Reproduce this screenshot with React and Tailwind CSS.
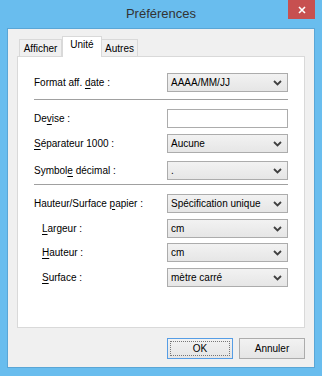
import React from "react";

const font = { fontFamily: '"Liberation Sans", Arial, sans-serif' };

function Chevron() {
  return (
    <svg width="9" height="6" viewBox="0 0 9 6" className="shrink-0">
      <path d="M1 1 L4.5 4.5 L8 1" fill="none" stroke="#404040" strokeWidth="1.8" />
    </svg>
  );
}

function Select({ value }) {
  return (
    <div className="flex h-[19px] w-[121px] items-center justify-between whitespace-nowrap border border-[#acacac] bg-gradient-to-b from-[#f2f2f2] to-[#e6e6e6] pl-[3px] pr-[5px] text-[10px] leading-none text-black">
      <span>{value}</span>
      <Chevron />
    </div>
  );
}

function Label({ children, indent }) {
  return (
    <div className={`whitespace-nowrap text-[10px] leading-none text-black ${indent ? "pl-[8px]" : ""}`}>{children}</div>
  );
}

function Row({ label, children, indent, className = "" }) {
  return (
    <div className={`flex items-center justify-between ${className}`}>
      <Label indent={indent}>{label}</Label>
      {children}
    </div>
  );
}

const U = ({ children }) => <span className="underline underline-offset-2">{children}</span>;

export default function App() {
  return (
    <div style={font} className="flex h-[376px] w-[322px] flex-col bg-[#69bdee] px-[7px] pb-[8px]">
      <div className="relative flex h-[28px] shrink-0 items-center justify-center">
        <span className="pb-[1px] text-[13px] text-[#333]">Préférences</span>
        <div className="absolute right-0 top-0 flex h-[19px] w-[27px] items-center justify-center bg-[#c75050]">
          <svg width="8" height="8" viewBox="0 0 8 8">
            <path d="M1 1 L7 7 M7 1 L1 7" stroke="#fff" strokeWidth="1.6" />
          </svg>
        </div>
      </div>
      <div className="flex flex-1 flex-col border border-[#5aa6d6] bg-[#f0f0f0] px-[9px]">
        <div className="flex h-[27px] items-end pl-[2px] pt-[8px]">
          <div className="flex h-[17px] w-[43px] items-center justify-center border border-b-0 border-[#d9d9d9] bg-[#f0f0f0] pt-[1px] text-[10px] leading-none text-black">
            Afficher
          </div>
          <div className="relative z-10 -mb-px flex h-[21px] w-[40px] items-start justify-center border border-b-0 border-[#d9d9d9] bg-white pt-[3px] text-[10px] leading-none text-black">
            Unité
          </div>
          <div className="flex h-[17px] w-[36px] items-center justify-center border border-b-0 border-l-0 border-[#d9d9d9] bg-[#f0f0f0] pt-[1px] text-[10px] leading-none text-black">
            Autres
          </div>
        </div>
        <div className="flex h-[272px] flex-col border border-[#d9d9d9] bg-white px-[16px] pt-[16px]">
          <Row label={<>Format aff. <U>d</U>ate :</>}>
            <Select value="AAAA/MM/JJ" />
          </Row>
          <div className="mt-[7px] h-px bg-[#a0a0a0]" />
          <Row className="mt-[9px]" label={<>De<U>v</U>ise :</>}>
            <div className="h-[19px] w-[121px] border border-[#acacac] bg-white" />
          </Row>
          <Row className="mt-[6px]" label={<><U>S</U>éparateur 1000 :</>}>
            <Select value="Aucune" />
          </Row>
          <Row className="mt-[8px]" label={<>Symbol<U>e</U> décimal :</>}>
            <Select value="." />
          </Row>
          <div className="mt-[4px] h-px bg-[#a0a0a0]" />
          <Row className="mt-[9px]" label={<>Hauteur/Surface <U>p</U>apier :</>}>
            <Select value="Spécification unique" />
          </Row>
          <Row className="mt-[6px]" indent label={<><U>L</U>argeur :</>}>
            <Select value="cm" />
          </Row>
          <Row className="mt-[5px]" indent label={<><U>H</U>auteur :</>}>
            <Select value="cm" />
          </Row>
          <Row className="mt-[6px]" indent label={<><U>S</U>urface :</>}>
            <Select value="mètre carré" />
          </Row>
        </div>
        <div className="mt-[10px] flex justify-end gap-[6px]">
          <div className="flex h-[21px] w-[66px] items-center justify-center border border-[#569de5] bg-gradient-to-b from-[#f2f2f2] to-[#e5e5e5] p-[2px]">
            <div className="flex h-full w-full items-center justify-center border border-dotted border-[#777] text-[10px] leading-none text-black">
              OK
            </div>
          </div>
          <div className="flex h-[21px] w-[66px] items-center justify-center border border-[#acacac] bg-gradient-to-b from-[#f2f2f2] to-[#e5e5e5] text-[10px] leading-none text-black">
            Annuler
          </div>
        </div>
      </div>
    </div>
  );
}
